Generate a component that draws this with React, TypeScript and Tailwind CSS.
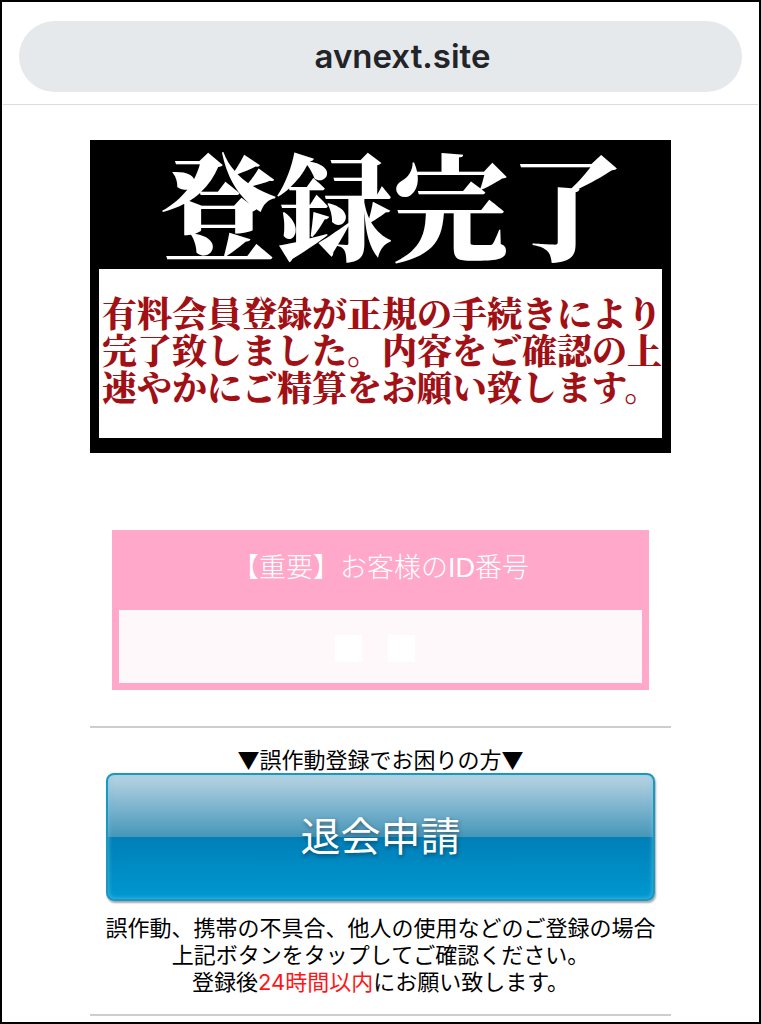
const sans = "font-['Liberation_Sans','Noto_Sans_CJK_JP',sans-serif]";
const serif = "font-['Liberation_Serif','Noto_Serif_CJK_JP','Noto_Sans_CJK_JP',serif]";

const noticeLines = [
  "有料会員登録が正規の手続きにより",
  "完了致しました。内容をご確認の上",
  "速やかにご精算をお願い致します。",
];

export default function App() {
  return (
    <div className={`min-h-screen border-2 border-black bg-white text-black ${sans}`}>
      {/* Address bar */}
      <header className="px-px">
        <div className="border-b border-[#dcdcde] px-4 pt-[19px] pb-3">
          <div className="flex h-[71px] items-center justify-center rounded-full bg-[#e6e9ec] pl-[44px]">
            <span className="font-['Inter',sans-serif] text-[33px] font-semibold text-[#222428]">avnext.site</span>
          </div>
        </div>
      </header>

      <main className="px-[88px] pt-[35px]">
        {/* Notice banner */}
        <section className={`bg-black px-[9px] pb-[15px] font-black ${serif}`}>
          <h1 className="flex h-[129px] items-center justify-center pt-4 pl-[24px] text-[116px] leading-none whitespace-nowrap text-white">
            登録完了
          </h1>
          <div className="h-[169px] bg-white pt-[28px] pl-[3px] text-[35px] leading-[37px] whitespace-nowrap text-[#a01015]">
            {noticeLines.map((line) => (
              <p key={line}>{line}</p>
            ))}
          </div>
        </section>

        {/* Customer ID */}
        <section className="mx-[22px] mt-[77px] bg-[#ffa8c9] px-[7px] pb-[7px]">
          <h2 className="flex h-[80px] items-center justify-center pb-1 text-[27px] font-light text-white">
            【重要】お客様のID番号
          </h2>
          <div className="flex h-[73px] items-center justify-center gap-[26px] bg-[#fef8fa] pt-1 pr-3">
            <span className="size-[27px] bg-white" />
            <span className="size-[27px] bg-white" />
          </div>
        </section>

        {/* Withdrawal request */}
        <section className="mt-9 border-y-2 border-[#cdcdcd] pt-[17px] pb-[18px] text-center text-[22px] leading-[27px]">
          <p className="h-7">
            <span className="font-['Noto_Sans_CJK_JP',sans-serif]">▼</span>
            誤作動登録でお困りの方
            <span className="font-['Noto_Sans_CJK_JP',sans-serif]">▼</span>
          </p>
          <div className="px-4">
            <button
              type="button"
              className="h-[128px] w-full rounded-lg border-2 border-[#1b98bf] bg-[linear-gradient(to_bottom,#b9d4e2_0%,#7fb5cf_25%,#4596b8_50%,#007fb8_50%,#0098d0_100%)] text-[40px] text-white shadow-[1px_2px_2px_rgba(0,0,0,0.35),inset_0_0_5px_rgba(120,205,235,0.7)] text-shadow-[1px_2px_4px_rgba(0,0,0,0.4)]"
            >
              退会申請
            </button>
          </div>
          <p className="mt-[14px]">誤作動、携帯の不具合、他人の使用などのご登録の場合</p>
          <p>上記ボタンをタップしてご確認ください。</p>
          <p>
            登録後
            <span className="text-[#ff1418]">
              <span className="font-['Inter',sans-serif]">24</span>時間以内
            </span>
            にお願い致します。
          </p>
        </section>
      </main>
    </div>
  );
}
